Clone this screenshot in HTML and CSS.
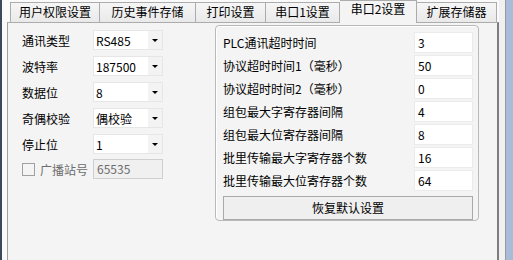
FILE: index.html
```html
<!doctype html>
<html lang="zh-CN">
<head>
    <meta charset="UTF-8">
    <title>串口2设置</title>
    <link rel="stylesheet" href="styles.css">
</head>
<body>
    <div class="window">
        <div class="tabctl">
            <!--选项卡-->
            <div class="tabbar">
                <div class="tab t1">用户权限设置</div>
                <div class="tab t2">历史事件存储</div>
                <div class="tab t3">打印设置</div>
                <div class="tab t4">串口1设置</div>
                <div class="tab t5 active">串口2设置</div>
                <div class="tab t6">扩展存储器</div>
            </div>
            <!--页面-->
            <div class="page">
                <div class="form-left">
                    <div class="row">
                        <span class="lbl">通讯类型</span>
                        <div class="combo"><span>RS485</span><i class="arrow"></i></div>
                    </div>
                    <div class="row">
                        <span class="lbl">波特率</span>
                        <div class="combo"><span>187500</span><i class="arrow"></i></div>
                    </div>
                    <div class="row">
                        <span class="lbl">数据位</span>
                        <div class="combo"><span>8</span><i class="arrow"></i></div>
                    </div>
                    <div class="row">
                        <span class="lbl">奇偶校验</span>
                        <div class="combo"><span>偶校验</span><i class="arrow"></i></div>
                    </div>
                    <div class="row">
                        <span class="lbl">停止位</span>
                        <div class="combo"><span>1</span><i class="arrow"></i></div>
                    </div>
                    <div class="row row-check">
                        <label class="check"><span class="box"></span>广播站号</label>
                        <div class="field-dis">65535</div>
                    </div>
                </div>
                <!--右边分组-->
                <div class="group">
                    <div class="grow"><span>PLC通讯超时时间</span><div class="field">3</div></div>
                    <div class="grow"><span>协议超时时间1（毫秒）</span><div class="field">50</div></div>
                    <div class="grow"><span>协议超时时间2（毫秒）</span><div class="field">0</div></div>
                    <div class="grow"><span>组包最大字寄存器间隔</span><div class="field">4</div></div>
                    <div class="grow"><span>组包最大位寄存器间隔</span><div class="field">8</div></div>
                    <div class="grow"><span>批里传输最大字寄存器个数</span><div class="field">16</div></div>
                    <div class="grow"><span>批里传输最大位寄存器个数</span><div class="field">64</div></div>
                    <div class="btn">恢复默认设置</div>
                </div>
            </div>
        </div>
        <div class="side"></div>
    </div>
</body>
</html>
```

FILE: styles.css
```css
body{
    margin: 0;
    font-family: "Noto Sans CJK SC", "Liberation Sans", sans-serif;
    font-size: 12px;
    color: #000;
    background: #f0f0f0;
}
/*最外层*/
.window{
    display: flex;
    height: 260px;
    border-left: 2px solid #3a495c;
    padding-left: 5px;
    background: #fafafa;
    overflow: hidden;
}
.tabctl{
    width: 492px;
    display: flex;
    flex-direction: column;
}
/*选项卡*/
.tabbar{
    height: 22px;
    display: flex;
    align-items: flex-end;
    padding-left: 3px;
}
.tab{
    height: 20px;
    box-sizing: border-box;
    border: 1px solid #acacac;
    border-bottom: none;
    border-left: none;
    background: linear-gradient(#f6f6f6, #e9e9e9);
    text-align: center;
    line-height: 17px;
}
.t1{ width: 90px; border-left: 1px solid #acacac; }
.t2{ width: 96px; }
.t3{ width: 70px; }
.t4{ width: 74px; }
.t5{ width: 77px; }
.t6{ width: 80px; }
.tab.active{
    height: 23px;
    margin-bottom: -1px;
    background: #f4f4f4;
    line-height: 15px;
    position: relative;
    z-index: 1;
}
/*页面*/
.page{
    flex: 1;
    display: flex;
    background: #f4f4f4;
    border-top: 1px solid #acacac;
    border-left: 1px solid #a0a0a0;
    border-right: 2px solid #7d7d7d;
    padding: 7px 0 0 14px;
}
/*左边表单*/
.form-left{
    width: 141px;
    display: flex;
    flex-direction: column;
    gap: 6px;
}
.row{
    display: flex;
    align-items: center;
    height: 20px;
}
.lbl{
    width: 71px;
}
.combo{
    width: 70px;
    height: 20px;
    box-sizing: border-box;
    border: 1px solid #e6e6e6;
    background: #fff;
    display: flex;
    align-items: center;
    padding-left: 2px;
    position: relative;
}
.combo > span{
    flex: 1;
}
.arrow{
    width: 14px;
    height: 18px;
    background: #f3f3f3;
    position: relative;
}
.arrow::after{
    content: "";
    position: absolute;
    left: 4px;
    top: 8px;
    border-left: 3px solid transparent;
    border-right: 3px solid transparent;
    border-top: 3px solid #000;
}
.row-check{
    margin-top: -1px;
}
.check{
    width: 71px;
    display: flex;
    align-items: center;
    color: #6d6d6d;
}
.box{
    width: 11px;
    height: 11px;
    border: 1px solid #a0a0a0;
    background: #f4f4f4;
    margin-right: 5px;
}
.field-dis{
    width: 70px;
    height: 20px;
    box-sizing: border-box;
    border: 1px solid #cfcfcf;
    background: #f0f0f0;
    color: #6d6d6d;
    padding-left: 3px;
    line-height: 18px;
}
/*右边分组*/
.group{
    width: 264px;
    height: 196px;
    box-sizing: border-box;
    margin: -5px 0 0 52px;
    border: 1px solid #b9b9b9;
    border-radius: 4px;
    box-shadow: inset 1px 1px 0 #fff;
    padding: 6px 5px 0 7px;
    display: flex;
    flex-direction: column;
    gap: 2px;
}
.grow{
    display: flex;
    align-items: center;
    justify-content: space-between;
    height: 21px;
}
.field{
    width: 59px;
    height: 21px;
    box-sizing: border-box;
    border: 1px solid #ebebeb;
    background: #fff;
    padding-left: 3px;
    line-height: 19px;
}
.btn{
    margin-top: 3px;
    height: 24px;
    box-sizing: border-box;
    border: 1px solid #a9a9a9;
    background: #efefef;
    text-align: center;
    line-height: 22px;
}
/*右边窗口边*/
.side{
    width: 14px;
    border-left: 6px solid #f0f0f0;
    box-sizing: border-box;
    background: #a8bbd9;
    box-shadow: inset 1px 0 0 #9a9a9a;
}
```
